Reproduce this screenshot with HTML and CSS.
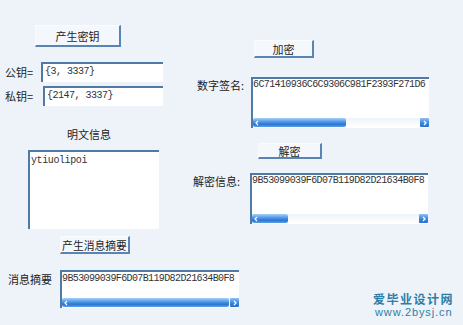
FILE: index.html
```html
<!DOCTYPE html>
<html lang="zh-CN">
<head>
<meta charset="utf-8">
<title>RSA 数字签名</title>
<link rel="stylesheet" href="styles.css">
</head>
<body>
<div class="page">
  <div class="col left">
    <div class="btn btn-keygen">产生密钥</div>
    <div class="row row-pub">
      <span class="label lab-pub">公钥=</span>
      <div class="field input input-pub"><div class="field-text">{3, 3337}</div></div>
    </div>
    <div class="row row-priv">
      <span class="label lab-priv">私钥=</span>
      <div class="field input input-priv"><div class="field-text">{2147, 3337}</div></div>
    </div>
    <div class="title">明文信息</div>
    <div class="field area-plain"><div class="field-text">ytiuolipoi</div></div>
    <div class="btn btn-digest">产生消息摘要</div>
    <div class="row row-digest">
      <span class="label lab-digest">消息摘要</span>
      <div class="field area-digest">
        <div class="field-text">9B53099039F6D07B119D82D21634B0F8</div>
        <div class="hscroll">
          <div class="thumb" style="width:167px"><svg class="chev" viewBox="0 0 6 6" width="6" height="6"><path d="M4 1 L2 3 L4 5" fill="none" stroke="#fff" stroke-width="1.2"/></svg></div>
          <div class="track"></div>
          <div class="arrow"><svg viewBox="0 0 6 6" width="6" height="6"><path d="M2 1 L4 3 L2 5" fill="none" stroke="#fff" stroke-width="1.3"/></svg></div>
        </div>
      </div>
    </div>
  </div>
  <div class="col right">
    <div class="btn btn-enc">加密</div>
    <div class="row row-sig">
      <span class="label lab-sig">数字签名:</span>
      <div class="field area-wide">
        <div class="field-text">6C71410936C6C9306C981F2393F271D6</div>
        <div class="hscroll">
          <div class="thumb" style="width:93px"><svg class="chev" viewBox="0 0 6 6" width="6" height="6"><path d="M4 1 L2 3 L4 5" fill="none" stroke="#fff" stroke-width="1.2"/></svg></div>
          <div class="track"></div>
          <div class="arrow"><svg viewBox="0 0 6 6" width="6" height="6"><path d="M2 1 L4 3 L2 5" fill="none" stroke="#fff" stroke-width="1.3"/></svg></div>
        </div>
      </div>
    </div>
    <div class="btn btn-dec">解密</div>
    <div class="row row-dec">
      <span class="label lab-dec">解密信息:</span>
      <div class="field area-wide">
        <div class="field-text">9B53099039F6D07B119D82D21634B0F8</div>
        <div class="hscroll">
          <div class="thumb" style="width:36px"><svg class="chev" viewBox="0 0 6 6" width="6" height="6"><path d="M4 1 L2 3 L4 5" fill="none" stroke="#fff" stroke-width="1.2"/></svg></div>
          <div class="track"></div>
          <div class="arrow"><svg viewBox="0 0 6 6" width="6" height="6"><path d="M2 1 L4 3 L2 5" fill="none" stroke="#fff" stroke-width="1.3"/></svg></div>
        </div>
      </div>
    </div>
    <div class="watermark">
      <div class="wm-cn">爱毕业设计网</div>
      <div class="wm-url">www.2bysj.cn</div>
    </div>
  </div>
</div>
</body>
</html>
```

FILE: styles.css
```css
html, body {
  margin: 0;
  padding: 0;
  background: #eef3fa;
}
body {
  font-family: "Noto Sans CJK SC", "Liberation Sans", sans-serif;
  font-size: 11px;
  color: #222;
}
.page {
  display: flex;
  width: 463px;
  height: 325px;
  overflow: hidden;
}
.col {
  display: flex;
  flex-direction: column;
  align-items: flex-start;
}
.left {
  width: 190px;
  flex: none;
}
.right {
  flex: 1;
}

/* buttons */
.btn {
  box-sizing: border-box;
  background: #f4f7fc;
  border-top: 1px solid #f9fbfe;
  border-left: 1px solid #f9fbfe;
  border-right: 2px solid #5a84b4;
  border-bottom: 2px solid #5a84b4;
  display: flex;
  align-items: center;
  justify-content: center;
  font-size: 11px;
  line-height: 14px;
  color: #1e1e1e;
}
.btn-keygen { margin: 25px 0 0 35px; width: 86px; height: 22px; }
.btn-digest { margin: 7px 0 0 60px; width: 70px; height: 18px; font-size: 10.8px; }
.btn-enc { margin: 40px 0 0 64px; width: 60px; height: 18px; }
.btn-dec { margin: 15px 0 0 68px; width: 64px; height: 16px; }

/* rows */
.row {
  display: flex;
  align-items: flex-start;
}
.label {
  box-sizing: border-box;
  flex: none;
  line-height: 14px;
  color: #222;
}
.row-pub { margin-top: 15px; }
.row-priv { margin-top: 4px; }
.row-digest { margin-top: 16px; }
.row-sig { margin-top: 19px; }
.row-dec { margin-top: 14px; }

.lab-pub { width: 41px; padding: 3px 0 0 5px; }
.lab-priv { width: 43px; padding: 3px 0 0 5px; }
.lab-digest { width: 60px; padding: 2px 0 0 8px; }
.lab-sig { width: 61px; padding: 1px 0 0 7px; }
.lab-dec { width: 60px; padding: 1px 0 0 3px; }

.title {
  margin: 21px 0 0 67px;
  line-height: 14px;
}

/* fields */
.field {
  box-sizing: border-box;
  background: #fff;
  border-top: 2px solid #4f7aa8;
  border-left: 2px solid #4f7aa8;
  display: flex;
  flex-direction: column;
  font-family: "Liberation Mono", monospace;
  font-size: 10px;
  letter-spacing: -0.62px;
  color: #333;
}
.field-text {
  flex: 1;
  padding: 0;
  line-height: 12px;
  white-space: nowrap;
  overflow: hidden;
}
.input .field-text { padding: 1px 2px 0; line-height: 14px; letter-spacing: -0.5px; }
.input-pub { width: 122px; height: 20px; }
.input-priv { width: 120px; height: 20px; }
.area-plain {
  margin: 9px 0 0 28px;
  width: 131px;
  height: 79px;
}
.area-plain .field-text { padding: 3px 1px 0; letter-spacing: -0.4px; }
.area-digest { width: 179px; height: 38px; }
.area-digest .field-text { padding-top: 1px; }
.area-wide { width: 178px; height: 51px; }

/* horizontal scrollbar */
.hscroll {
  flex: none;
  height: 9px;
  margin-bottom: 1px;
  display: flex;
  background: linear-gradient(#eef3fa, #ffffff);
}
.thumb {
  flex: none;
  height: 9px;
  box-sizing: border-box;
  border-radius: 2px;
  background: linear-gradient(#a8d0f8, #4a96e6 45%, #2c74d0 70%, #5ba2ea);
  display: flex;
  align-items: center;
  padding-left: 1px;
}
.track { flex: 1; }
.arrow {
  flex: none;
  width: 9px;
  height: 9px;
  border-radius: 1px;
  background: linear-gradient(#8fc2f4, #3a86de 55%, #2a6fcb);
  display: flex;
  align-items: center;
  justify-content: center;
}
.chev { display: block; }

/* watermark */
.watermark {
  margin: auto 0 6px 183px;
  color: #2c7ea6;
}
.wm-cn {
  font-family: "Noto Sans CJK SC", sans-serif;
  font-weight: 700;
  font-size: 12px;
  letter-spacing: 1.5px;
  line-height: 14px;
}
.wm-url {
  font-family: "Liberation Sans", sans-serif;
  font-size: 11px;
  letter-spacing: 0.9px;
  line-height: 13px;
  margin-left: 2px;
}
```
